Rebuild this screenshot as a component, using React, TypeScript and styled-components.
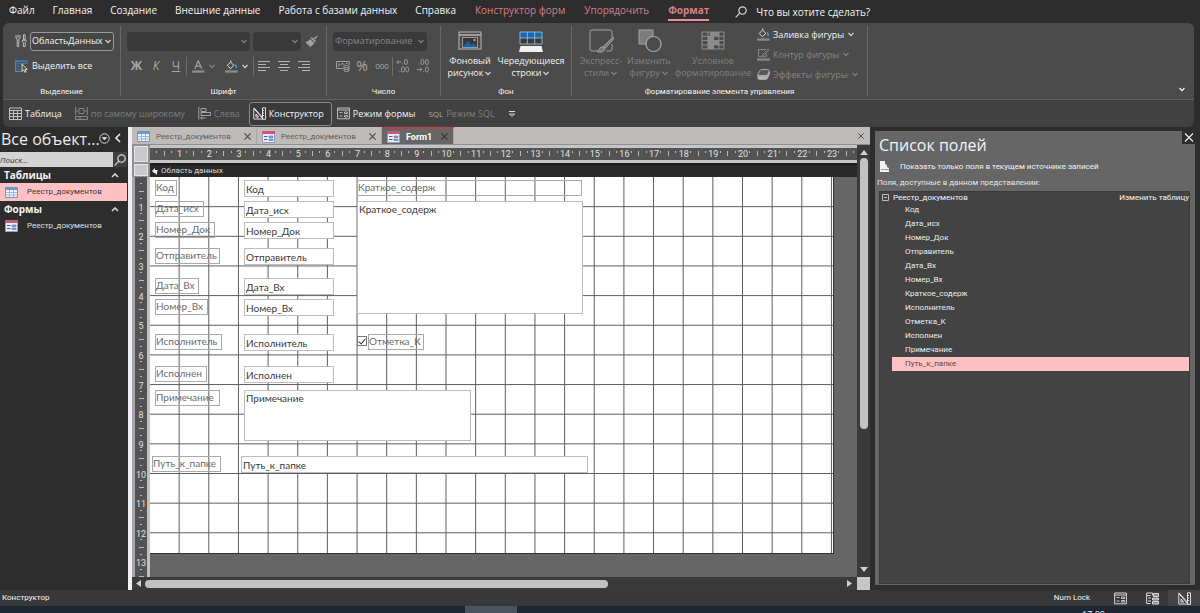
import React from "react";
import styled, { createGlobalStyle } from "styled-components";

const SMALL = `Roboto, "Open Sans", sans-serif`;
const FORM = `Lato, "Open Sans", sans-serif`;

const Global = createGlobalStyle`
  * { box-sizing: border-box; }
  html, body { margin: 0; background: #2d2d2d; }
  body, button, input, select, textarea {
    font-family: "Open Sans", "Noto Sans", sans-serif;
    font-size: 9px;
    line-height: 12px;
    color: #f4f4f4;
  }
  button, input, select, textarea { margin: 0; padding: 0; border: 0; background: none; }
  button { white-space: nowrap; cursor: pointer; }
  a { text-decoration: none; color: inherit; }
  svg { display: block; flex: none; }
  ul { margin: 0; padding: 0; list-style: none; }
`;

const LIGHT = "#d8d8d8";
const DIM = "#a2a2a2";
const FAINT = "#858585";

const Window = styled.div`
  display: flex;
  flex-direction: column;
  height: 100vh;
  min-height: 480px;
  overflow: hidden;
  background: #2d2d2d;
`;

/* ---------- menu ---------- */
const Menu = styled.nav`
  display: flex;
  align-items: center;
  height: 23px;
  padding-left: 9px;
  gap: 18px;
`;
const MenuItem = styled.a<{ $accent?: boolean; $active?: boolean }>`
  font-size: 10px;
  line-height: 15px;
  height: 18px;
  margin-left: ${(p) => (p.$accent ? 1 : 0)}px;
  white-space: nowrap;
  color: ${(p) => (p.$accent ? "#d67f89" : "#f4f4f4")};
  font-weight: ${(p) => (p.$active ? 700 : 400)};
  border-bottom: 2px solid ${(p) => (p.$active ? "#ef8b96" : "transparent")};
`;
const Tell = styled.button`
  display: flex;
  align-items: center;
  gap: 9px;
  margin-left: 8px;
  font-size: 10px;
`;

/* ---------- ribbon ---------- */
const Ribbon = styled.header`
  margin: 0 6px 0 3px;
  border-radius: 6px;
  overflow: hidden;
  background: #414141;
  flex: none;
`;
const Groups = styled.div`
  display: flex;
  height: 77px;
  padding: 3px 0;
  background: #4b4b4b;
  border-bottom: 1px solid #626262;
`;
const Group = styled.section<{ $w: number }>`
  display: flex;
  flex-direction: column;
  flex: none;
  width: ${(p) => p.$w}px;
  padding: 5px 6px 0;
  border-right: 1px solid #686868;
`;
const GroupName = styled.div`
  margin-top: auto;
  text-align: center;
  font-family: ${SMALL};
  font-size: 8px;
  line-height: 9px;
`;
const Line = styled.div<{ $gap?: number; $top?: number; $left?: number }>`
  display: flex;
  align-items: center;
  height: 20px;
  gap: ${(p) => p.$gap ?? 3}px;
  margin-top: ${(p) => p.$top ?? 0}px;
  padding-left: ${(p) => p.$left ?? 0}px;
`;
const Combo = styled.span<{ $w: number; $outlined?: boolean }>`
  position: relative;
  width: ${(p) => p.$w}px;
  height: 19px;
  flex: none;
  border-radius: 3px;
  border: 1px solid ${(p) => (p.$outlined ? "#9a9a9a" : "#3a3a3a")};
  background: ${(p) => (p.$outlined ? "#454545" : "#3a3a3a")};
  select {
    appearance: none;
    width: 100%;
    height: 17px;
    padding-left: 1px;
    opacity: 1;
    color: ${(p) => (p.$outlined ? "#f4f4f4" : "#858585")};
  }
  svg { position: absolute; right: 1px; top: 6px; pointer-events: none; }
`;
const Tool = styled.button<{ $w?: number; $dim?: boolean }>`
  display: flex;
  align-items: center;
  justify-content: ${(p) => (p.$w ? "center" : "flex-start")};
  gap: 3px;
  flex: none;
  width: ${(p) => (p.$w ? `${p.$w}px` : "auto")};
  color: ${(p) => (p.$dim ? "#858585" : "#f4f4f4")};
`;
const Glyph = styled.span<{ $bold?: boolean; $italic?: boolean; $under?: boolean; $size?: number }>`
  font-size: ${(p) => p.$size ?? 12}px;
  color: #a8a8a8;
  font-weight: ${(p) => (p.$bold ? 700 : 400)};
  font-style: ${(p) => (p.$italic ? "italic" : "normal")};
  text-decoration: ${(p) => (p.$under ? "underline" : "none")};
`;
const Rule = styled.i`
  width: 1px;
  height: 19px;
  background: #6e6e6e;
`;
const BigTools = styled.div<{ $gap: number }>`
  display: flex;
  gap: ${(p) => p.$gap}px;
`;
const BigTool = styled.button<{ $w: number; $dim?: boolean }>`
  display: flex;
  flex-direction: column;
  align-items: center;
  width: ${(p) => p.$w}px;
  flex: none;
  color: ${(p) => (p.$dim ? "#808080" : "#f4f4f4")};
  > svg { height: 24px; width: 26px; margin: -2px 0 2px; }
  > span { display: flex; align-items: center; gap: 1px; white-space: nowrap; line-height: 12px; }
`;
const Side = styled.div`
  display: flex;
  flex-direction: column;
  gap: 7px;
  margin: -3px 0 0 5px;
`;
const Columns = styled.div`
  display: flex;
`;
const Collapse = styled.button`
  margin: auto 8px 4px auto;
`;
const Views = styled.div`
  display: flex;
  align-items: center;
  height: 27px;
  padding-left: 6px;
  gap: 13px;
`;
const ViewButton = styled.button<{ $dim?: boolean; $active?: boolean }>`
  display: flex;
  align-items: center;
  gap: 3px;
  height: 24px;
  padding: 0 ${(p) => (p.$active ? 7 : 0)}px 0 ${(p) => (p.$active ? 3 : 0)}px;
  margin: 0 ${(p) => (p.$active ? -8 : 0)}px 0 ${(p) => (p.$active ? -4 : 0)}px;
  border: ${(p) => (p.$active ? "1px solid #8a8a8a" : "0")};
  border-radius: 3px;
  background: ${(p) => (p.$active ? "#3a3a3a" : "none")};
  color: ${(p) => (p.$dim ? "#7d7d7d" : "#f4f4f4")};
`;

/* ---------- main area ---------- */
const Main = styled.main`
  display: flex;
  flex: 1;
  min-height: 0;
`;
const Nav = styled.aside`
  width: 127px;
  flex: none;
`;
const NavHead = styled.div`
  display: flex;
  align-items: center;
  height: 25px;
  gap: 2px;
  font-size: 16px;
  line-height: 25px;
  white-space: nowrap;
  color: #ececec;
  padding: 0 6px 0 1px;
  svg { margin-top: -3px; }
  > svg { margin-left: -3px; }
  button { margin-left: auto; }
`;
const Search = styled.form`
  display: flex;
  height: 15px;
  input {
    flex: 1;
    min-width: 0;
    background: #d3d3d3;
    color: #333;
    font-size: 8px;
    font-style: italic;
  }
  input::placeholder { color: #333; opacity: 1; }
  button { width: 14px; background: #404040; display: flex; justify-content: center; align-items: center; }
`;
const NavGroup = styled.h2`
  display: flex;
  align-items: center;
  justify-content: space-between;
  margin: 0;
  height: 16px;
  padding: 0 8px 0 4px;
  font-size: 10px;
  font-weight: 700;
`;
const NavItem = styled.a<{ $selected?: boolean }>`
  display: flex;
  align-items: center;
  gap: 9px;
  height: 18px;
  padding-left: 5px;
  font-family: ${SMALL};
  font-size: 8px;
  background: ${(p) => (p.$selected ? "#ffc1c4" : "none")};
  color: ${(p) => (p.$selected ? "#4a3436" : "#e0e0e0")};
`;
const Documents = styled.section`
  display: flex;
  flex-direction: column;
  flex: 1;
  min-width: 0;
  margin-left: 1px;
  border-left: 4px solid #f0f0f4;
`;
const Tabs = styled.div`
  display: flex;
  height: 18px;
  background: #bfbbb8;
  border-bottom: 1px solid #8b8f96;
`;
const Tab = styled.div<{ $active?: boolean }>`
  display: flex;
  align-items: center;
  width: ${(p) => (p.$active ? 72 : 125)}px;
  padding: 0 5px;
  gap: 6px;
  font-family: ${SMALL};
  font-size: ${(p) => (p.$active ? 9 : 8)}px;
  font-weight: ${(p) => (p.$active ? 700 : 400)};
  color: ${(p) => (p.$active ? "#ffffff" : "#5c5c5c")};
  background: ${(p) => (p.$active ? "#666" : "none")};
  border-top: 2px solid ${(p) => (p.$active ? "#a8484f" : "transparent")};
  border-right: 1px solid #a9a6a4;
  button { margin-left: auto; }
`;
const CloseAll = styled.button`
  margin-left: auto;
  padding-right: 6px;
`;
const Work = styled.div`
  display: flex;
  flex: 1;
  min-height: 0;
`;
const Designer = styled.div`
  flex: 1;
  min-width: 0;
  display: grid;
  grid-template-columns: 18px 1fr;
  grid-template-rows: 18px 14px 1fr;
  background: #666;
`;
const Corner = styled.button`
  margin: 1px 2px 1px 2px;
  background: #c9c9c9;
  border: 1px solid #e6e6e6;
`;
const HRuler = styled.div`
  overflow: hidden;
  background: #535353;
  border-top: 3px solid #c6c6c6;
  border-bottom: 3px solid #c6c6c6;
`;
const CornerCell = styled.div`
  display: grid;
  background: #8e9096;
`;
const SectionBar = styled.div`
  display: flex;
  align-items: center;
  gap: 3px;
  padding-left: 2px;
  font-family: ${SMALL};
  font-size: 8px;
  background: #292929;
  border-top: 2px solid #1f1f1f;
  color: #dedede;
`;
const VRuler = styled.div`
  overflow: hidden;
  background: #535353;
  border-left: 3px solid #a6a6aa;
  border-right: 3px solid #c0c0c0;
`;
const Scroll = styled.div`
  overflow: hidden;
`;
const Canvas = styled.div`
  position: relative;
  width: 684px;
  height: 377px;
  background: #fff;
  border-right: 1px solid #333;
  border-bottom: 1px solid #333;
  > svg { position: absolute; left: 0; top: 0; }
`;
type Box = { $x: number; $y: number; $w: number; $h?: number };
const Caption = styled.label<Box>`
  position: absolute;
  left: ${(p) => p.$x}px;
  top: ${(p) => p.$y}px;
  width: ${(p) => p.$w}px;
  height: ${(p) => p.$h ?? 16}px;
  border: 1px solid #a9a9a9;
  font-family: ${FORM};
  font-size: 10px;
  line-height: 13px;
  white-space: nowrap;
  color: #6c6c6c;
`;
const Field = styled.input<Box>`
  position: absolute;
  left: ${(p) => p.$x}px;
  top: ${(p) => p.$y}px;
  width: ${(p) => p.$w}px;
  height: ${(p) => p.$h ?? 17}px;
  padding-left: 1px;
  border: 1px solid #bdbdbd;
  background: #fff;
  font-family: ${FORM};
  font-size: 10px;
  line-height: 14px;
  color: #3a3a3a;
`;
const Memo = styled(Field).attrs({ as: "textarea" })`
  resize: none;
  overflow: hidden;
`;
const Check = styled.input`
  position: absolute;
  left: 207px;
  top: 159px;
  width: 10px;
  height: 10px;
  appearance: none;
  border: 1px solid #777;
  background: #fff;
  &:checked::after {
    content: "";
    position: absolute;
    left: 2px;
    top: 0;
    width: 3px;
    height: 6px;
    border: solid #333;
    border-width: 0 1px 1px 0;
    transform: rotate(40deg);
  }
`;
const VScroll = styled.div`
  display: flex;
  flex-direction: column;
  justify-content: space-between;
  align-items: center;
  width: 13px;
  padding: 4px 0;
  background: #3a3a3a;
`;
const HScroll = styled.div`
  display: flex;
  align-items: center;
  height: 13px;
  padding-left: 3px;
  background: #3a3a3a;
`;
const Thumb = styled.div<{ $vertical?: boolean }>`
  border-radius: 4px;
  background: #c2c2c2;
  ${(p) =>
    p.$vertical
      ? "width: 8px; flex: 0 0 64%; margin: 2px 0 auto;"
      : "height: 8px; flex: 0 0 63%; margin: 0 auto 0 2px;"}
`;
const ScrollCorner = styled.i`
  width: 13px;
  height: 13px;
  margin-left: 4px;
  background: #c6c6ca;
`;

/* ---------- field list ---------- */
const Panel = styled.aside`
  display: flex;
  flex-direction: column;
  flex: none;
  width: 320px;
  margin: 4px 5px 5px 5px;
  padding: 0 5px 1px 4px;
  background: #666;
  font-family: ${SMALL};
  font-size: 8px;
`;
const PanelHead = styled.div`
  display: flex;
  justify-content: space-between;
  height: 27px;
  font-family: "Open Sans", "Noto Sans", sans-serif;
  h1 { margin: 0; font-size: 16px; line-height: 28px; font-weight: 400; }
  button { width: 13px; height: 13px; margin-right: -5px; background: #2d2d2d; }
`;
const ShowOnly = styled.a`
  display: flex;
  align-items: center;
  gap: 10px;
  height: 17px;
  padding-left: 1px;
`;
const Hint = styled.p`
  margin: 0 0 0 -2px;
  line-height: 16px;
  color: #e6e6e6;
`;
const List = styled.div`
  flex: 1;
  background: #434343;
  border: 1px solid #3b3b3b;
`;
const Parent = styled.div`
  display: flex;
  align-items: center;
  gap: 4px;
  height: 11px;
  padding-left: 2px;
  a { margin-left: auto; }
`;
const Leaf = styled.li<{ $selected?: boolean }>`
  height: 14px;
  line-height: 14px;
  margin-left: 12px;
  padding-left: 13px;
  background: ${(p) => (p.$selected ? "#ffc1c4" : "none")};
  color: ${(p) => (p.$selected ? "#5a4547" : "#ececec")};
`;

/* ---------- bottom ---------- */
const Status = styled.footer`
  display: flex;
  align-items: center;
  flex: none;
  height: 16px;
  padding-left: 2px;
  background: #383838;
  font-family: ${SMALL};
  font-size: 8px;
  > span:nth-child(2) { margin-left: auto; margin-right: 14px; }
`;
const Mode = styled.button<{ $active?: boolean }>`
  display: flex;
  align-items: center;
  justify-content: center;
  width: 32px;
  height: 16px;
  background: ${(p) => (p.$active ? "#444" : "none")};
`;
const Taskbar = styled.div`
  display: flex;
  justify-content: space-between;
  flex: none;
  height: 7px;
  overflow: hidden;
  padding: 0 95px 0 465px;
  background: #1d2632;
  i { width: 52px; background: #4a5360; }
  time { font-size: 9px; line-height: 12px; padding-top: 3px; }
`;

/* ---------- drawings ---------- */
const Chevron = ({ c = LIGHT, d = "down" }: { c?: string; d?: "down" | "up" | "left" }) => (
  <svg width={d === "left" ? 7 : 8} height={d === "left" ? 10 : 5} fill="none" stroke={c} strokeWidth={d === "down" ? 1.1 : 1.6}>
    <path d={d === "down" ? "M1.5 1L4 3.6L6.5 1" : d === "up" ? "M1 4L4 1L7 4" : "M6 1L2 5L6 9"} />
  </svg>
);
const Cross = ({ c = "#444", s = 7 }: { c?: string; s?: number }) => (
  <svg width={s} height={s} viewBox="0 0 8 8" stroke={c} strokeWidth="1.2"><path d="M.5.5l7 7M7.5.5l-7 7" /></svg>
);
const Glass = ({ s = 12, c = LIGHT }: { s?: number; c?: string }) => (
  <svg width={s} height={s} viewBox="0 0 12 12" fill="none" stroke={c} strokeWidth="1.2">
    <circle cx="7.5" cy="4.5" r="3.7" /><path d="M4.8 7.2L.7 11.3" />
  </svg>
);
const Triangle = ({ d }: { d: string }) => (
  <svg width="8" height="7" fill="#d0d0d0"><path d={d} /></svg>
);
const Settings = () => (
  <svg width="12" height="14" viewBox="0 0 12 14" fill="none" stroke="#bdbdbd" strokeWidth="1">
    <path d="M1 1v3.2l1.2 1v7.3h1.6V5.200L5 4.200V1M3 .8v3" />
    <path d="M8.500 .8h1.600v5.200h-1.600zM7.500 6h3.500v1.600l-.8 .8v4.100h-1.900V8.400l-.8-.8z" />
  </svg>
);
const SelectAll = () => (
  <svg width="14" height="13" viewBox="0 0 14 13" fill="none">
    <path d="M6.500 11.400H.700V1.200H11.800V4" stroke="#3b8fd1" strokeWidth="1.300" />
    <path d="M2.500 3.600h2M2.500 6.200h2M2.500 8.800h2M5.500 3.600h4.500" stroke="#3b8fd1" />
    <path d="M7 4.200v7.200l1.700-1.500 1.200 2.500 1.200-.6-1.100-2.400h2.300z" fill="#4b4b4b" stroke="#e6e6e6" strokeWidth=".9" />
  </svg>
);
const Brush = () => (
  <svg width="13" height="13" viewBox="0 0 13 13" fill="#a2a2a2">
    <path d="M12.300 .4l.6 .8-3 3.200-1.400-1.200zM5.500 3.200l1.400-1 4 3.800-.9 1.500zM4.800 4l4.700 4.300-4.300 3.900-1-1 .9-1.500-1.600 .9-1-.8 1.100-1.200-1.600 .6L.6 6.700c1.800 0 3.300-1 4.200-2.700z" />
  </svg>
);
const Fill = ({ bar = "#8b8b8b" }: { bar?: string }) => (
  <svg width="13" height="13" viewBox="0 0 13 13" fill="none">
    <path d="M5.500 2.200L2.200 5.500l3.300 3.200 3.300-3.200-3-3.300V.5" stroke="#e2e2e2" />
    <path d="M9.800 4.500c1.400 .4 1.500 1.500 1.300 3.600" stroke="#4f9fdc" strokeWidth="1.300" />
    <rect x="0" y="10.400" width="12.600" height="2.300" fill={bar} />
  </svg>
);
const FontColor = () => (
  <svg width="13" height="13" viewBox="0 0 13 13" fill="none">
    <path d="M2.800 8.800L6.300 .8l3.500 8M3.900 6.200h4.800" stroke="#a2a2a2" strokeWidth="1.200" />
    <rect y="10.400" width="12.600" height="2.300" fill="#8b8b8b" />
  </svg>
);
const Align = ({ a }: { a: number }) => (
  <svg width="12" height="12" stroke="#b4b4b4">
    {[12, 8, 12, 8].map((w, i) => (
      <path key={i} d={`M${((12 - w) * a) / 2} ${i * 3 + 1.5}h${w}`} />
    ))}
  </svg>
);
const Money = () => (
  <svg width="14" height="12" viewBox="0 0 14 12" fill="none" stroke={DIM}>
    <path d="M7 8.500H.6V1.500H13.200V5M3 3.500v3M5 5a1.500 1.500 0 1 1 3 0M10 3.500h1.500" />
    <ellipse cx="10.500" cy="6.700" rx="2.500" ry="1.200" /><path d="M8 6.700v4c0 1 5 1 5 0v-4M8 8.700c0 1 5 1 5 0" />
  </svg>
);
const Decimals = ({ more }: { more?: boolean }) => (
  <svg width="14" height="14" viewBox="0 0 14 14" fill="none" stroke={DIM} strokeWidth=".9">
    <path d={more ? "M.8 3h4.700M2.600 1.200L.8 3l1.800 1.800" : "M.8 10.500h5M4 8.700l1.800 1.800L4 12.300"} />
    {(more ? [[8.5, 0]] : [[5, 0], [9.5, 0], [9.5, 7.5]]).map(([x, y]) => (
      <rect key={`${x}${y}`} x={x} y={y + 0.5} width="2.800" height="5" rx="1.400" />
    ))}
    {more && <><rect x="5.500" y="8" width="2.800" height="5" rx="1.400" /><rect x="9.800" y="8" width="2.800" height="5" rx="1.400" /></>}
    <path d={more ? "M3.500 12.500h1M6.500 5h.9" : "M2.500 5h1M7.300 12.500h1"} />
  </svg>
);
const Picture = () => (
  <svg viewBox="0 0 26 24" fill="none">
    <rect x="2" y="3" width="22" height="17" stroke="#b9b9b9" />
    <path d="M2 6h22" stroke="#b9b9b9" strokeWidth="1.500" />
    <rect x="5.500" y="8.500" width="15" height="10" fill="#383838" stroke="#9a9a9a" />
    <path d="M6 18l5-6 3.500 4 2-2 3.500 4z" fill="#0f62ad" /><circle cx="17.500" cy="11" r="1.200" fill="#e8923c" />
  </svg>
);
const Stripes = () => (
  <svg viewBox="0 0 26 24" fill="none">
    <path d="M2 3h22v12H2z" fill="#3a3a3a" />
    <rect x="2" y="3" width="22" height="6" fill="#0f6cbd" />
    <path d="M2 3h22v12H2zM2 9h22M9.300 3v12M16.700 3v12" stroke="#b4c0cc" strokeWidth=".8" />
    <path d="M2.500 17h21l1.500 6H1z" fill="#f2f2f2" />
  </svg>
);
const Express = () => (
  <svg viewBox="0 0 26 24" fill="none" stroke={DIM}>
    <path d="M11 22H4a2 2 0 0 1-2-2V3a2 2 0 0 1 2-2h18a2 2 0 0 1 2 2v5M24 15v5a2 2 0 0 1-2 2h-4" />
    <path d="M25 8L15.500 17.500l1.800 1.800L26 9.500zM15 18c-2.500-.5-3.500 1-3.800 2.600-.2 1-1 1.900-2.200 2.100 3.500 1 7.500 .5 7.800-3z" fill="#777" />
  </svg>
);
const Shape = () => (
  <svg viewBox="0 0 26 24" fill="none" stroke={DIM}>
    <rect x="3" y="1" width="14" height="14" fill="#7c7c7c" />
    <circle cx="17.500" cy="15" r="7.500" fill="#4b4b4b" stroke="#a9a9a9" strokeWidth="1.200" />
  </svg>
);
const Conditional = () => (
  <svg viewBox="0 0 26 24" fill="none" stroke="#8e8e8e">
    <path d="M10 3h9v4h-9zM8 7h5v5H8zM8 12h11v4H8zM8 16h5v4H8z" fill="#8a8a8a" stroke="none" />
    <path d="M2 3h22v17H2zM2 7.300h22M2 11.600h22M2 15.900h22M8 3v17M19 3v17M13.500 7v5M13.500 16v4" />
  </svg>
);
const Outline = () => (
  <svg width="13" height="13" viewBox="0 0 13 13" fill="none" stroke={FAINT}>
    <path d="M9 1.500H1.500v7.200H9.500V6M11.500 .8L5.500 6.800l-.8 1.700 1.800-.7 6-6z" />
    <rect y="10.900" width="12.600" height="1.300" fill="#8b8b8b" />
  </svg>
);
const Effects = () => (
  <svg width="13" height="13" viewBox="0 0 13 13" fill="none" stroke="#a8a8a8">
    <path d="M4.800 1.500h5.900c1.200 0 1.800 .8 1.400 1.900L10.800 6.500c-.3 .7-.9 1-1.600 1H2.500C1 7.500 .8 6.400 1.200 5.500L2.800 2.700C3.200 2 3.900 1.500 4.800 1.500z" fill="#585858" />
    <path d="M.8 6.500v2.800C.8 10.800 1.500 11.500 2.500 11.500h6.200c.8 0 1.400-.4 1.700-1l2-4.500V3.500L10.500 7.500 8.500 8H2.500z" fill="#b5b5b5" />
  </svg>
);
const TableIcon = ({ c = "#c4c4c4" }: { c?: string }) => (
  <svg width="13" height="13" viewBox="0 0 13 13" fill="none" stroke={c}>
    <path d="M.5 1h12v11.500H.5zM.5 3.500h12M.5 6.500h12M.5 9.500h12M4.500 3.500v9M8.500 3.500v9" />
  </svg>
);
const Widest = () => (
  <svg width="13" height="13" viewBox="0 0 13 13" fill="none" stroke={FAINT}>
    <path d="M4 1.500h5v5H4zM.7 0v8M12.300 0v8M1 4h2M10 4h2M.5 9.500h12v3H.5zM5 9.500v3" />
  </svg>
);
const LeftAlign = () => (
  <svg width="13" height="13" viewBox="0 0 13 13" fill="none" stroke={DIM}>
    <path d="M.8 0v12.500M3 1.500h5v3H3zM3 5.500h9.500v3H3zM2.500 11h5M4.200 9.500L2.700 11l1.500 1.500" />
  </svg>
);
const DesignIcon = () => (
  <svg width="13" height="13" viewBox="0 0 13 13" fill="none" stroke="#e0e0e0">
    <path d="M.8 1.500V12H10zM3 7v3h2.700z" /><path d="M9.500 .8h3v11.500h-3zM9.500 3.500h1.500M9.500 6h1.500M9.500 8.500h1.500" />
    <path d="M1 .8l8.500 9.500" />
  </svg>
);
const FormIcon = ({ c = "#c4c4c4" }: { c?: string }) => (
  <svg width="13" height="13" viewBox="0 0 13 13" fill="none" stroke={c}>
    <path d="M.6 1h11.800v10.800H.6zM.6 3h11.800" />
    <path d="M2.500 5.500h3M2.500 9h3M7.500 5h3v1.500h-3zM7.500 8.500h3V10h-3z" strokeWidth=".9" />
  </svg>
);
const LayoutIcon = () => (
  <svg width="13" height="13" viewBox="0 0 13 13" fill="none" stroke={LIGHT}>
    <path d="M.6 1h6v2.500M.6 1v10.500h4M.6 3.500h4M2 6h3M2 9h3" />
    <path d="M7.500 1.500h5v3h-5zM6.500 6h6v2h-6zM6.500 9.500h6v2.500h-6z" fill="#8a8a8a" />
  </svg>
);
const ColorTable = () => (
  <svg width="13" height="11" viewBox="0 0 13 11" fill="none">
    <path d="M.5.5h12v10H.5z" fill="#eef4fb" stroke="#6f93bd" /><path d="M1 1h11v2H1z" fill="#6a9bd4" />
    <path d="M.5 5.500h12M.5 8h12M4.500 3v7.500M8.500 3v7.500" stroke="#9db8d8" />
  </svg>
);
const ColorForm = () => (
  <svg width="13" height="12" viewBox="0 0 13 12" fill="none">
    <path d="M.5.5h12v11H.5z" fill="#e9eefb" stroke="#8f9dc4" /><path d="M0 0h13v3H0z" fill="#c65a7c" />
    <path d="M2 5.500h3.500M2 8.500h3.500" stroke="#44639c" /><path d="M7 5h4v1.500H7zM7 8h4v1.500H7z" fill="#7fa2dc" stroke="#5578b8" strokeWidth=".6" />
  </svg>
);

const UNIT = 29.65;
const Grid = () => (
  <svg width="683" height="376" stroke="#5e5e5e">
    {Array.from({ length: 23 }, (_, i) => (
      <path key={`v${i}`} d={`M${(i + 1) * UNIT - 0.5} 0V376`} />
    ))}
    {Array.from({ length: 12 }, (_, i) => (
      <path key={`h${i}`} d={`M0 ${(i + 1) * UNIT}H683`} />
    ))}
  </svg>
);
const Ticks = ({ count, vertical }: { count: number; vertical?: boolean }) => (
  <svg
    width={vertical ? 12 : 708}
    height={vertical ? 400 : 12}
    fill="#e0e0e0"
    stroke="#b8b8b8"
    fontFamily={SMALL}
    fontSize="9"
    textAnchor="middle"
  >
    {Array.from({ length: count }, (_, i) => {
      const at = (q: number) => Math.round((i + q) * UNIT) - 0.5;
      return (
        <React.Fragment key={i}>
          {vertical ? (
            <path d={`M5 ${at(0.25)}h2M4 ${at(0.5)}h5M5 ${at(0.75)}h2`} />
          ) : (
            <path d={`M${at(0.25)} 3v2M${at(0.5)} 3v5M${at(0.75)} 3v2`} />
          )}
          {i > 0 && (
            <text stroke="none" x={vertical ? 6 : i * UNIT} y={vertical ? i * UNIT + 4 : 9}>{i}</text>
          )}
        </React.Fragment>
      );
    })}
  </svg>
);

/* name, caption x / y / width, field x / width */
const rows: [string, number, number, number, number, number][] = [
  ["Код", 5, 3, 22, 94, 90],
  ["Дата_исх", 5, 24, 49, 94, 90],
  ["Номер_Док", 5, 45, 60, 94, 90],
  ["Отправитель", 5, 71, 65, 94, 90],
  ["Дата_Вх", 5, 101, 44, 94, 90],
  ["Номер_Вх", 5, 122, 53, 94, 90],
  ["Исполнитель", 5, 157, 67, 94, 90],
  ["Исполнен", 5, 189, 52, 94, 90],
  ["Путь_к_папке", 2, 279, 69, 91, 347],
];
const fields = [
  "Код", "Дата_исх", "Номер_Док", "Отправитель", "Дата_Вх", "Номер_Вх",
  "Краткое_содерж", "Исполнитель", "Отметка_К", "Исполнен", "Примечание", "Путь_к_папке",
];

export default function App() {
  return (
    <Window>
      <Global />
      <Menu>
        {["Файл", "Главная", "Создание", "Внешние данные", "Работа с базами данных", "Справка"].map((t) => (
          <MenuItem key={t} href="#">{t}</MenuItem>
        ))}
        <MenuItem href="#" $accent>Конструктор форм</MenuItem>
        <MenuItem href="#" $accent>Упорядочить</MenuItem>
        <MenuItem href="#" $accent $active>Формат</MenuItem>
        <Tell><Glass />Что вы хотите сделать?</Tell>
      </Menu>

      <Ribbon>
        <Groups>
          <Group $w={118}>
            <Line $left={6}>
              <Settings />
              <Combo $w={84} $outlined>
                <select aria-label="Объект"><option>ОбластьДанных</option></select><Chevron />
              </Combo>
            </Line>
            <Line $top={5} $left={6}><Tool><SelectAll />Выделить все</Tool></Line>
            <GroupName>Выделение</GroupName>
          </Group>

          <Group $w={206}>
            <Line>
              <Combo $w={123}><select disabled aria-label="Шрифт"><option /></select><Chevron c={FAINT} /></Combo>
              <Combo $w={48}><select disabled aria-label="Размер"><option /></select><Chevron c={FAINT} /></Combo>
              <Tool $w={14} aria-label="Формат по образцу"><Brush /></Tool>
            </Line>
            <Line $top={5} $gap={0}>
              <Tool $w={19}><Glyph $bold>Ж</Glyph></Tool>
              <Tool $w={20}><Glyph $italic>К</Glyph></Tool>
              <Tool $w={20}><Glyph $under>Ч</Glyph></Tool>
              <Rule />
              <Tool $w={34} aria-label="Цвет текста"><FontColor /><Chevron c={FAINT} /></Tool>
              <Tool $w={32} aria-label="Цвет фона"><Fill /><Chevron /></Tool>
              <Rule />
              {[0, 1, 2].map((a) => <Tool key={a} $w={20} aria-label="Выравнивание"><Align a={a} /></Tool>)}
            </Line>
            <GroupName>Шрифт</GroupName>
          </Group>

          <Group $w={114}>
            <Line>
              <Combo $w={94}><select disabled aria-label="Формат"><option>Форматирование</option></select><Chevron c={FAINT} /></Combo>
            </Line>
            <Line $top={5} $gap={0}>
              <Tool $w={19} aria-label="Денежный"><Money /></Tool>
              <Tool $w={20}><Glyph $size={14}>%</Glyph></Tool>
              <Tool $w={20}><Glyph $size={8}>000</Glyph></Tool>
              <Rule />
              <Tool $w={20} aria-label="Увеличить разрядность"><Decimals more /></Tool>
              <Tool $w={20} aria-label="Уменьшить разрядность"><Decimals /></Tool>
            </Line>
            <GroupName>Число</GroupName>
          </Group>

          <Group $w={131}>
            <BigTools $gap={4}>
              <BigTool $w={46}><Picture /><span>Фоновый</span><span>рисунок<Chevron /></span></BigTool>
              <BigTool $w={68}><Stripes /><span>Чередующиеся</span><span>строки<Chevron /></span></BigTool>
            </BigTools>
            <GroupName>Фон</GroupName>
          </Group>

          <Group $w={296}>
            <Columns>
              <BigTools $gap={2}>
                <BigTool $w={46} $dim><Express /><span>Экспресс-</span><span>стили<Chevron c={FAINT} /></span></BigTool>
                <BigTool $w={46} $dim><Shape /><span>Изменить</span><span>фигуру<Chevron c={FAINT} /></span></BigTool>
                <BigTool $w={78} $dim><Conditional /><span>Условное</span><span>форматирование</span></BigTool>
              </BigTools>
              <Side>
                <Tool><Fill />Заливка фигуры<Chevron /></Tool>
                <Tool $dim><Outline />Контур фигуры<Chevron c={FAINT} /></Tool>
                <Tool $dim><Effects />Эффекты фигуры<Chevron c={FAINT} /></Tool>
              </Side>
            </Columns>
            <GroupName>Форматирование элемента управления</GroupName>
          </Group>
          <Collapse aria-label="Свернуть ленту"><Chevron c="#fff" /></Collapse>
        </Groups>
        <Views>
          <ViewButton><TableIcon />Таблица</ViewButton>
          <ViewButton $dim><Widest />по самому широкому</ViewButton>
          <ViewButton $dim><LeftAlign />Слева</ViewButton>
          <ViewButton $active><DesignIcon />Конструктор</ViewButton>
          <ViewButton><FormIcon />Режим формы</ViewButton>
          <ViewButton $dim><Glyph $size={8}>SQL</Glyph>Режим SQL</ViewButton>
          <ViewButton aria-label="Настройка">
            <svg width="8" height="8" fill="none" stroke={LIGHT}><path d="M1 1.500h6M1.500 4l2.500 2.500L6.500 4z" /></svg>
          </ViewButton>
        </Views>
      </Ribbon>

      <Main>
        <Nav>
          <NavHead>
            Все объект...
            <svg width="11" height="11" fill="none" stroke={LIGHT}><circle cx="5.500" cy="5.500" r="4.700" /><path d="M3.500 4.500h4L5.500 7z" fill={LIGHT} /></svg>
            <button aria-label="Свернуть"><Chevron d="left" c="#eee" /></button>
          </NavHead>
          <Search>
            <input placeholder="Поиск..." aria-label="Поиск" />
            <button type="button" aria-label="Найти"><Glass /></button>
          </Search>
          <NavGroup>Таблицы<Chevron d="up" /></NavGroup>
          <NavItem href="#" $selected><ColorTable />Реестр_документов</NavItem>
          <NavGroup>Формы<Chevron d="up" /></NavGroup>
          <NavItem href="#"><ColorForm />Реестр_документов</NavItem>
        </Nav>

        <Documents>
          <Tabs>
            <Tab><ColorTable />Реестр_документов<button aria-label="Закрыть"><Cross /></button></Tab>
            <Tab><ColorForm />Реестр_документов<button aria-label="Закрыть"><Cross /></button></Tab>
            <Tab $active><ColorForm />Form1<button aria-label="Закрыть"><Cross c="#333" /></button></Tab>
            <CloseAll aria-label="Закрыть"><Cross s={6} /></CloseAll>
          </Tabs>
          <Work>
            <Designer>
              <CornerCell><Corner aria-label="Выделить форму" /></CornerCell>
              <HRuler><Ticks count={24} /></HRuler>
              <CornerCell><Corner aria-label="Выделить раздел" /></CornerCell>
              <SectionBar>
                <svg width="6" height="7" fill="#f0f0f0"><path d="M0 3l3-3v2h3L5 4v3L3 5H2z" /></svg>
                Область данных
              </SectionBar>
              <VRuler><Ticks count={14} vertical /></VRuler>
              <Scroll>
                <Canvas>
                  <Grid />
                  {rows.map(([name, x, y, w, fx, fw]) => (
                    <React.Fragment key={name}>
                      <Caption htmlFor={name} $x={x} $y={y} $w={w}>{name}</Caption>
                      <Field id={name} defaultValue={name} $x={fx} $y={y} $w={fw} />
                    </React.Fragment>
                  ))}
                  <Caption htmlFor="memo" $x={5} $y={213} $w={65}>Примечание</Caption>
                  <Memo id="memo" defaultValue="Примечание" $x={94} $y={213} $w={227} $h={51} />
                  <Caption htmlFor="brief" $x={207} $y={3} $w={225}>Краткое_содерж</Caption>
                  <Memo id="brief" defaultValue="Краткое_содерж" $x={207} $y={24} $w={226} $h={113} />
                  <Check id="mark" type="checkbox" defaultChecked />
                  <Caption htmlFor="mark" $x={218} $y={157} $w={56}>Отметка_К</Caption>
                </Canvas>
              </Scroll>
            </Designer>
            <VScroll>
              <Triangle d="M0 6L4 1L8 6z" />
              <Thumb $vertical />
              <Triangle d="M0 1L4 6L8 1z" />
            </VScroll>
          </Work>
          <HScroll>
            <Triangle d="M6 0L1 3.500L6 7z" />
            <Thumb />
            <Triangle d="M2 0L7 3.500L2 7z" />
            <ScrollCorner />
          </HScroll>
        </Documents>

        <Panel>
          <PanelHead>
            <h1>Список полей</h1>
            <button aria-label="Закрыть список"><svg width="13" height="13" stroke="#eee" strokeWidth="1.200"><path d="M3 2.500l8 8M11 2.500l-8 8" /></svg></button>
          </PanelHead>
          <ShowOnly href="#">
            <svg width="10" height="11" fill="#f4f4f4"><path d="M0 0h5v3l2 1v2l2 1v4H0z" /><path d="M1 8.500h8" stroke="#999" /></svg>
            Показать только поля в текущем источнике записей
          </ShowOnly>
          <Hint>Поля, доступные в данном представлении:</Hint>
          <List>
            <Parent>
              <svg width="7" height="7" fill="none" stroke="#bbb"><path d="M.5.5h6v6h-6zM2 3.500h3" /></svg>
              Реестр_документов
              <a href="#">Изменить таблицу</a>
            </Parent>
            <ul>
              {fields.map((f) => <Leaf key={f} $selected={f === "Путь_к_папке"}>{f}</Leaf>)}
            </ul>
          </List>
        </Panel>
      </Main>

      <Status>
        <span>Конструктор</span>
        <span>Num Lock</span>
        <Mode aria-label="Режим формы"><FormIcon c={LIGHT} /></Mode>
        <Mode aria-label="Режим макета"><LayoutIcon /></Mode>
        <Mode aria-label="Режим конструктора" $active><DesignIcon /></Mode>
      </Status>
      <Taskbar><i /><time>17:08</time></Taskbar>
    </Window>
  );
}
